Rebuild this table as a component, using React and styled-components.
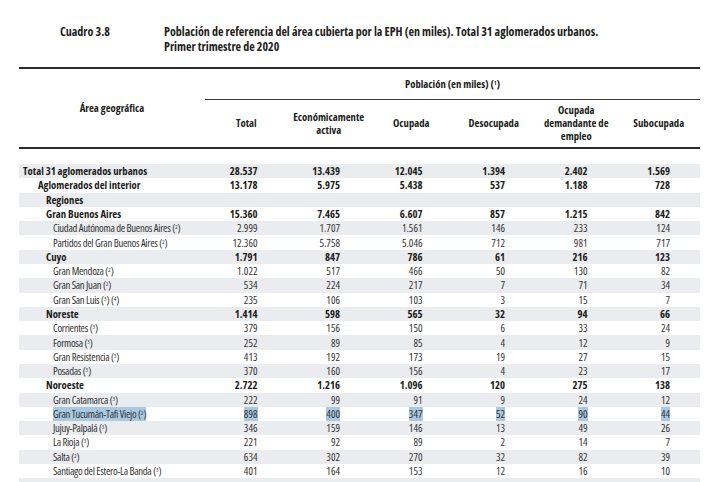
import React from "react";
import styled, { createGlobalStyle } from "styled-components";

const GlobalStyle = createGlobalStyle`
  html, body {
    margin: 0;
    padding: 0;
    background: #ffffff;
  }
  body {
    font-family: "Open Sans", "Liberation Sans", Arial, sans-serif;
    font-stretch: 75%;
    color: #1d1d1b;
  }
`;

const Page = styled.div`
  width: 715px;
  padding: 24px 0 0 19px;
  box-sizing: border-box;
`;

const TitleBlock = styled.div`
  display: flex;
  align-items: flex-start;
  margin-bottom: 13px;
  font-weight: 700;
  font-size: 12px;
  line-height: 15px;
`;

const Cuadro = styled.div`
  width: 104px;
  padding-left: 41px;
  flex: 0 0 auto;
`;

const Title = styled.div`
  width: 520px;
  white-space: nowrap;
`;

const Table = styled.table`
  width: 681px;
  table-layout: fixed;
  border-collapse: collapse;
  border-spacing: 0;
`;

const HeadCell = styled.th`
  padding: 0;
  font-weight: 700;
  font-size: 10.7px;
  line-height: 12.7px;
  text-align: center;
  vertical-align: middle;
  height: ${(p) => p.$h || "auto"};
  border-top: ${(p) => (p.$top ? "2px solid #2b2b2b" : "none")};
  border-bottom: ${(p) => (p.$rule === "thin" ? "1px solid #3a3a3a" : p.$rule === "thick" ? "2px solid #2b2b2b" : "none")};
`;

const SpacerRow = styled.tr`
  height: 16px;
`;

const Row = styled.tr`
  height: 14.29px;
  background: ${(p) => (p.$striped ? "#eaecef" : "transparent")};
`;

const LabelCell = styled.td`
  padding: 0 0 0 ${(p) => [4, 19, 27, 34][p.$level]}px;
  font-size: 10.7px;
  letter-spacing: ${(p) => (p.$bold ? "0" : "-0.3px")};
  line-height: 14px;
  font-weight: ${(p) => (p.$bold ? 700 : 400)};
  white-space: nowrap;
  overflow: hidden;
  color: ${(p) => (p.$bold ? "#1d1d1b" : "#333333")};
`;

const NumCell = styled.td`
  padding: 0 30px 0 0;
  text-align: right;
  font-size: 10.7px;
  line-height: 14px;
  font-weight: ${(p) => (p.$bold ? 700 : 400)};
  white-space: nowrap;
  color: ${(p) => (p.$bold ? "#1d1d1b" : "#333333")};
`;

const Mark = styled.span`
  background: ${(p) => (p.$on ? "#a9c8e2" : "transparent")};
  display: inline-block;
  line-height: 14px;
`;

const Sup = styled.span`
  font-size: 6px;
  vertical-align: 3px;
  line-height: 0;
  letter-spacing: 0;
`;

const Note = ({ n }) => (
  <>
    (<Sup>{n}</Sup>)
  </>
);

const rows = [
  { label: "Total 31 aglomerados urbanos", level: 0, bold: true, v: ["28.537", "13.439", "12.045", "1.394", "2.402", "1.569"] },
  { label: "Aglomerados del interior", level: 1, bold: true, v: ["13.178", "5.975", "5.438", "537", "1.188", "728"] },
  { label: "Regiones", level: 2, bold: true, v: ["", "", "", "", "", ""] },
  { label: "Gran Buenos Aires", level: 2, bold: true, v: ["15.360", "7.465", "6.607", "857", "1.215", "842"] },
  { label: "Ciudad Autónoma de Buenos Aires", notes: ["2"], level: 3, v: ["2.999", "1.707", "1.561", "146", "233", "124"] },
  { label: "Partidos del Gran Buenos Aires", notes: ["2"], level: 3, v: ["12.360", "5.758", "5.046", "712", "981", "717"] },
  { label: "Cuyo", level: 2, bold: true, v: ["1.791", "847", "786", "61", "216", "123"] },
  { label: "Gran Mendoza", notes: ["2"], level: 3, v: ["1.022", "517", "466", "50", "130", "82"] },
  { label: "Gran San Juan", notes: ["2"], level: 3, v: ["534", "224", "217", "7", "71", "34"] },
  { label: "Gran San Luis", notes: ["3", "4"], level: 3, v: ["235", "106", "103", "3", "15", "7"] },
  { label: "Noreste", level: 2, bold: true, v: ["1.414", "598", "565", "32", "94", "66"] },
  { label: "Corrientes", notes: ["3"], level: 3, v: ["379", "156", "150", "6", "33", "24"] },
  { label: "Formosa", notes: ["3"], level: 3, v: ["252", "89", "85", "4", "12", "9"] },
  { label: "Gran Resistencia", notes: ["3"], level: 3, v: ["413", "192", "173", "19", "27", "15"] },
  { label: "Posadas", notes: ["3"], level: 3, v: ["370", "160", "156", "4", "23", "17"] },
  { label: "Noroeste", level: 2, bold: true, v: ["2.722", "1.216", "1.096", "120", "275", "138"] },
  { label: "Gran Catamarca", notes: ["3"], level: 3, v: ["222", "99", "91", "9", "24", "12"] },
  { label: "Gran Tucumán-Tafi Viejo", notes: ["2"], level: 3, hl: true, v: ["898", "400", "347", "52", "90", "44"] },
  { label: "Jujuy-Palpalá", notes: ["3"], level: 3, v: ["346", "159", "146", "13", "49", "26"] },
  { label: "La Rioja", notes: ["3"], level: 3, v: ["221", "92", "89", "2", "14", "7"] },
  { label: "Salta", notes: ["2"], level: 3, v: ["634", "302", "270", "32", "82", "39"] },
  { label: "Santiago del Estero-La Banda", notes: ["3"], level: 3, v: ["401", "164", "153", "12", "16", "10"] },
  { label: "", level: 3, v: ["", "", "", "", "", ""] },
];

export default function App() {
  return (
    <>
      <GlobalStyle />
      <Page>
        <TitleBlock>
          <Cuadro>Cuadro 3.8</Cuadro>
          <Title>
            Población de referencia del área cubierta por la EPH (en miles). Total 31 aglomerados urbanos.
            <br />
            Primer trimestre de 2020
          </Title>
        </TitleBlock>

        <Table>
          <colgroup>
            <col style={{ width: 186 }} />
            <col span={6} />
          </colgroup>
          <thead>
            <tr>
              <HeadCell rowSpan={2} $top $rule="thick">
                Área geográfica
              </HeadCell>
              <HeadCell colSpan={6} $top $rule="thin" $h="30px">
                Población (en miles) (<Sup>1</Sup>)
              </HeadCell>
            </tr>
            <tr>
              <HeadCell $rule="thick" $h="47px">Total</HeadCell>
              <HeadCell $rule="thick">
                Económicamente
                <br />
                activa
              </HeadCell>
              <HeadCell $rule="thick">Ocupada</HeadCell>
              <HeadCell $rule="thick">Desocupada</HeadCell>
              <HeadCell $rule="thick">
                Ocupada
                <br />
                demandante de
                <br />
                empleo
              </HeadCell>
              <HeadCell $rule="thick">Subocupada</HeadCell>
            </tr>
          </thead>
          <tbody>
            <SpacerRow>
              <td colSpan={7} />
            </SpacerRow>
            {rows.map((r, i) => (
              <Row key={i} $striped={i % 2 === 0}>
                <LabelCell $level={r.level} $bold={r.bold}>
                  <Mark $on={r.hl}>
                    {r.label}
                    {(r.notes || []).map((n, k) => (
                      <React.Fragment key={k}>
                        {" "}
                        <Note n={n} />
                      </React.Fragment>
                    ))}
                  </Mark>
                </LabelCell>
                {r.v.map((val, j) => (
                  <NumCell key={j} $bold={r.bold}>
                    <Mark $on={r.hl}>{val}</Mark>
                  </NumCell>
                ))}
              </Row>
            ))}
          </tbody>
        </Table>
      </Page>
    </>
  );
}
